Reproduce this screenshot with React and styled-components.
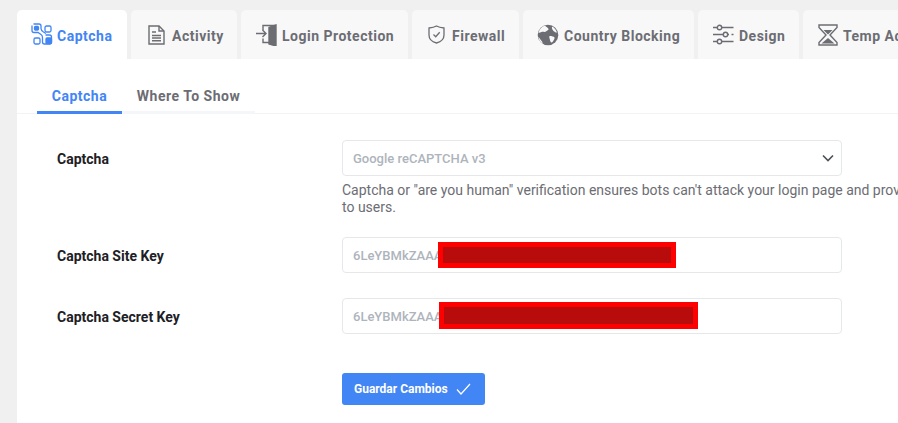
import React from 'react';
import styled, { createGlobalStyle } from 'styled-components';

const GlobalStyle = createGlobalStyle`
    html, body { margin: 0; padding: 0; height: 100%; overflow: hidden; background: #f0f0f1; }
    body { font-family: Roboto, "Liberation Sans", sans-serif; -webkit-font-smoothing: antialiased; }
    * { box-sizing: border-box; }
`;

const Page = styled.div`
    width: 898px; height: 423px; padding: 10px 0 0 17px;
    overflow: hidden;
`;

const TabBar = styled.ul`
    display: flex; gap: 4px; margin: 0; padding: 0; list-style: none;
    width: 1000px; height: 49px;
`;

const Tab = styled.li`
    flex: none; display: flex; align-items: center; gap: ${({ $gap }) => $gap || 7}px;
    width: ${({ $width }) => $width}px; height: 49px;
    padding: 0 0 0 ${({ $pad }) => $pad}px;
    border-radius: 5px 5px 0 0;
    background: ${({ $active }) => ($active ? '#fff' : '#f8f8f9')};
    color: ${({ $active }) => ($active ? '#4285f4' : '#6c6d73')};
    font-size: 14px; font-weight: 700; letter-spacing: 0.5px; white-space: nowrap;
    svg { flex: none; display: block; }
`;

const TabLabel = styled.span`
    margin-top: 3px;
`;

const Panel = styled.div`
    width: 881px; height: 364px; padding-top: 20px;
    background: #fff;
`;

const SubTabs = styled.div`
    position: relative; display: flex; height: 35px; padding-left: 20px;
    border-bottom: 1px solid #f3f3f4;
`;

const SubTab = styled.div`
    display: flex; justify-content: center; width: ${({ $width }) => $width}px; height: 35px;
    padding-top: 9px;
    border-bottom: 3px solid ${({ $active }) => ($active ? '#4285f4' : '#f5f6f9')};
    color: ${({ $active }) => ($active ? '#4285f4' : '#6c6d73')};
    font-size: 14px; font-weight: 700; letter-spacing: 0.5px;
`;

const Form = styled.div`
    display: flex; flex-direction: column; padding: 26px 0 0 40px;
`;

const Row = styled.div`
    display: grid; grid-template-columns: 285px 500px; align-items: start;
    margin-bottom: ${({ $gap }) => $gap || 25}px;
`;

const Label = styled.label`
    padding-top: 11px; color: #1d2024;
    font-size: 14px; font-weight: 700; line-height: 16px;
`;

const Field = styled.div`
    position: relative; display: flex; align-items: center; justify-content: space-between;
    width: 500px; height: 36px; padding: 0 7px 0 10px;
    border: 1px solid #e6e7e9; border-radius: 4px;
    color: #aeb4bc; font-size: 13px; font-weight: 500;
`;

const Help = styled.p`
    width: 640px; margin: 6px 0 0; color: #6c6d73;
    font-size: 14px; line-height: 17px; white-space: nowrap;
`;

const Redaction = styled.span`
    position: absolute; left: ${({ $left }) => $left}px; top: ${({ $top }) => $top}px;
    width: ${({ $width }) => $width}px; height: ${({ $height }) => $height}px;
    border: 5px solid #ff0000; background: #b80c0c;
`;

const SaveButton = styled.button`
    display: flex; align-items: center; gap: 8px;
    width: 143px; height: 32px; margin: 14px 0 0 285px; padding: 0 0 0 12px;
    border: 0; border-radius: 3px; background: #4285f4;
    color: #fff; font-family: inherit; font-size: 12px; font-weight: 700;
`;

const CaptchaIcon = () => (
    <svg width="23" height="23" viewBox="0 0 23 23" fill="none" stroke="#4285f4" strokeWidth="1.3">
        <path d="M2.500 1h5.500a2 2 0 0 1 2 2v2.500c0 1.500 1 2.500 2.500 3.500l2.500 1.500M1 2.500v5a2 2 0 0 0 2 2h4l3 2c1.200.8 1.500 1.500 1.500 3v4.500a2 2 0 0 0 2 2h5a2 2 0 0 0 2-2v-5a2 2 0 0 0-2-2h-4" />
        <rect x="3.500" y="3.500" width="4" height="3.500" rx="1" fill="#4285f4" />
        <rect x="14" y="3" width="6" height="6" rx="1.500" />
        <rect x="3" y="15" width="6" height="6" rx="1.500" />
        <rect x="15" y="15" width="5.500" height="5.500" rx="1" fill="#4285f4" />
    </svg>
);

const DocIcon = () => (
    <svg width="17" height="20" viewBox="0 0 17 20" fill="none" stroke="#6c6d73" strokeWidth="1.4">
        <path d="M1 1h10l5 5v13H1z" />
        <path d="M11 1v5h5M4 7h4M4 10.500h9M4 13h9M4 15.800h9" />
    </svg>
);

const DoorIcon = () => (
    <svg width="21" height="22" viewBox="0 0 21 22" fill="none" stroke="#6c6d73" strokeWidth="1.4">
        <path d="M7 6V1.500h13M7 14.500v4h6" />
        <path d="M13 3.500l7-2.500v21l-7-2z" fill="#6c6d73" />
        <path d="M0 9.500h9.500M6.500 6l3.500 3.500L6.500 13" />
    </svg>
);

const ShieldIcon = () => (
    <svg width="17" height="19" viewBox="0 0 17 19" fill="none" stroke="#6c6d73" strokeWidth="1.3">
        <path d="M8.500 1C6 2.500 3.500 2.800 1 3v7c0 4 3 6.800 7.500 8 4.500-1.200 7.500-4 7.500-8V3c-2.500-.2-5-.5-7.500-2z" />
        <path d="M5.500 9.500l2.200 2.200 4-4.500" />
    </svg>
);

const GlobeIcon = () => (
    <svg width="22" height="22" viewBox="0 0 22 22">
        <circle cx="11" cy="11" r="10.300" fill="#6c6d73" />
        <path d="M8 1.500c1 1.500 3 2 3.500 3.500.4 1.300-1.500 1.500-2.500 2.500S6 7.500 4.500 8 2 9 1.500 8.500C2.500 5 5 2.500 8 1.500zM13 12c1.500 0 4 .5 4.500 1.500.4 1-1 3.500-2.500 5-1 .5-1.800-1-2-2.500S11.500 12 13 12zM15 2.500c2.500 1.200 4.200 3.500 5 6-1 .3-2.500-.5-3.500-1.500S14.500 4 15 2.500zM1.200 13c1 .5 2 2.500 3 3.500s1.500 2 1.300 3C3.500 18.300 2 16 1.200 13z" fill="#f8f8f9" />
    </svg>
);

const SlidersIcon = () => (
    <svg width="21" height="21" viewBox="0 0 21 21" fill="none" stroke="#6c6d73" strokeWidth="1.4">
        <circle cx="6.500" cy="3.500" r="2.200" />
        <circle cx="12.500" cy="10.500" r="2.200" />
        <circle cx="6.500" cy="17.500" r="2.200" />
        <path d="M0 3.500h4M9 3.500h11.500M0 10.500h10M15 10.500h1M18.500 10.500h2M0 17.500h4M9 17.500h11.500" />
    </svg>
);

const HourglassIcon = () => (
    <svg width="20" height="22" viewBox="0 0 20 22" fill="none" stroke="#6c6d73" strokeWidth="1.4">
        <path d="M1 1h18v2.500L12 11l7 7.500V21H1v-2.500L8 11 1 3.500z" />
        <path d="M5.500 6h9L10 10.500zM3.500 19.500 10 14l6.500 5.500z" fill="#6c6d73" stroke="none" />
    </svg>
);

const ChevronIcon = () => (
    <svg width="12" height="8" viewBox="0 0 12 8" fill="none" stroke="#4d5056" strokeWidth="1.6">
        <path d="M1 1.500l5 5 5-5" />
    </svg>
);

const CheckIcon = () => (
    <svg width="15" height="12" viewBox="0 0 15 12" fill="none" stroke="#fff" strokeWidth="1.200">
        <path d="M1 6.500l4 4.500L14 1" />
    </svg>
);

const tabs = [
    { label: 'Captcha', icon: <CaptchaIcon />, width: 110, pad: 14, gap: 3, active: true },
    { label: 'Activity', icon: <DocIcon />, width: 106, pad: 17 },
    { label: 'Login Protection', icon: <DoorIcon />, width: 167, pad: 15, gap: 5 },
    { label: 'Firewall', icon: <ShieldIcon />, width: 107, pad: 16 },
    { label: 'Country Blocking', icon: <GlobeIcon />, width: 171, pad: 14, gap: 5 },
    { label: 'Design', icon: <SlidersIcon />, width: 101, pad: 15, gap: 5 },
    { label: 'Temp Access', icon: <HourglassIcon />, width: 130, pad: 15, gap: 5 },
];

export default function App() {
    return (
        <Page>
            <GlobalStyle />
            <TabBar>
                {tabs.map((tab) => (
                    <Tab key={tab.label} $width={tab.width} $pad={tab.pad} $gap={tab.gap} $active={tab.active}>
                        {tab.icon}
                        <TabLabel>{tab.label}</TabLabel>
                    </Tab>
                ))}
            </TabBar>
            <Panel>
                <SubTabs>
                    <SubTab $width={85} $active>Captcha</SubTab>
                    <SubTab $width={133}>Where To Show</SubTab>
                </SubTabs>
                <Form>
                    <Row $gap={21}>
                        <Label>Captcha</Label>
                        <div>
                            <Field>
                                Google reCAPTCHA v3
                                <ChevronIcon />
                            </Field>
                            <Help>
                                Captcha or "are you human" verification ensures bots can't attack your login page and provide
                                <br />
                                to users.
                            </Help>
                        </div>
                    </Row>
                    <Row>
                        <Label>Captcha Site Key</Label>
                        <Field>
                            6LeYBMkZAAA
                            <Redaction $left={95} $top={4} $width={238} $height={26} />
                        </Field>
                    </Row>
                    <Row>
                        <Label>Captcha Secret Key</Label>
                        <Field>
                            6LeYBMkZAAA
                            <Redaction $left={96} $top={3} $width={259} $height={27} />
                        </Field>
                    </Row>
                    <SaveButton>
                        Guardar Cambios
                        <CheckIcon />
                    </SaveButton>
                </Form>
            </Panel>
        </Page>
    );
}
